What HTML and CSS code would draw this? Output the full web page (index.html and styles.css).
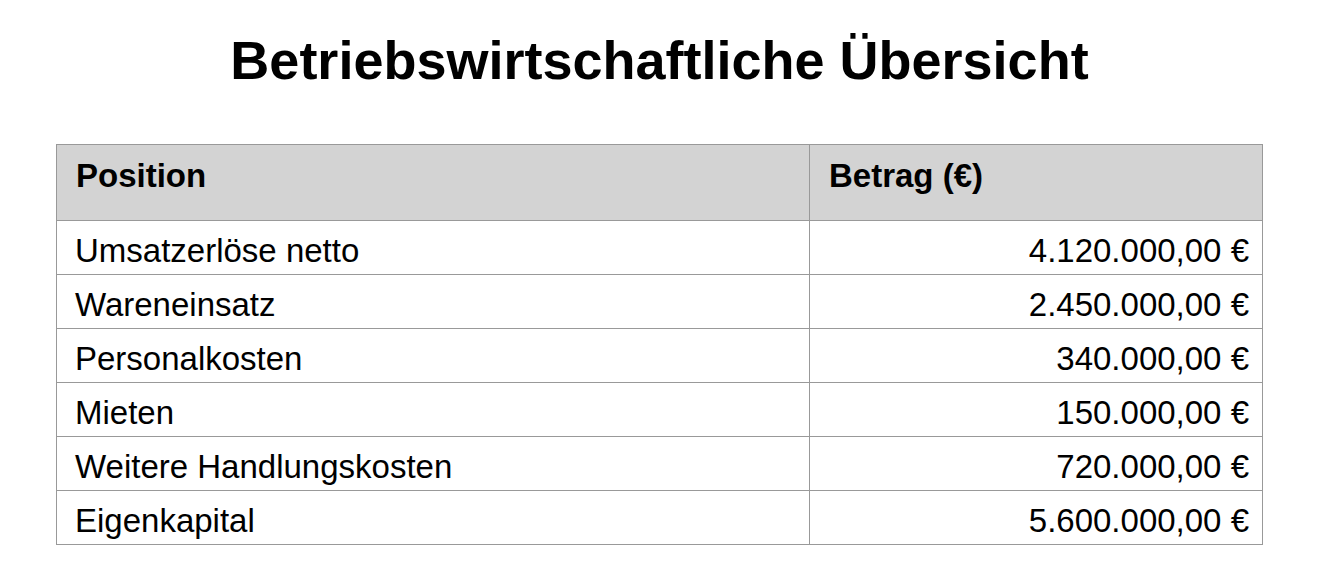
FILE: index.html
```html
<!DOCTYPE html>
<html lang="de">
<head>
<meta charset="utf-8">
<title>Betriebswirtschaftliche Übersicht</title>
<link rel="stylesheet" href="styles.css">
</head>
<body>
<main class="page">
  <h1 class="title">Betriebswirtschaftliche Übersicht</h1>
  <table class="sheet">
    <thead>
      <tr>
        <th class="col-pos">Position</th>
        <th class="col-amt">Betrag (€)</th>
      </tr>
    </thead>
    <tbody>
      <tr><td>Umsatzerlöse netto</td><td class="num">4.120.000,00 €</td></tr>
      <tr><td>Wareneinsatz</td><td class="num">2.450.000,00 €</td></tr>
      <tr><td>Personalkosten</td><td class="num">340.000,00 €</td></tr>
      <tr><td>Mieten</td><td class="num">150.000,00 €</td></tr>
      <tr><td>Weitere Handlungskosten</td><td class="num">720.000,00 €</td></tr>
      <tr><td>Eigenkapital</td><td class="num">5.600.000,00 €</td></tr>
    </tbody>
  </table>
</main>
</body>
</html>
```

FILE: styles.css
```css
html, body {
  margin: 0;
  padding: 0;
  background: #ffffff;
}

body {
  font-family: "Liberation Sans", Arial, Helvetica, sans-serif;
  color: #000000;
}

.page {
  padding: 0 57px 0 56px;
}

.title {
  margin: 0;
  padding-top: 29px;
  height: 144px;
  box-sizing: border-box;
  text-align: center;
  font-size: 54px;
  font-weight: 700;
  line-height: 62px;
}

.sheet {
  width: 100%;
  border-collapse: collapse;
  border: 1px solid #999999;
}

.sheet th,
.sheet td {
  border: 1px solid #999999;
  font-size: 33px;
  line-height: 38px;
  box-sizing: border-box;
  vertical-align: top;
}

.sheet th {
  background: #d3d3d3;
  text-align: left;
  font-weight: 700;
  height: 76px;
  padding: 12px 18px 0 19px;
}

.col-pos {
  width: 753px;
}

.sheet td {
  font-weight: 400;
  height: 54px;
  padding: 11px 13px 0 18px;
}

.sheet td.num {
  text-align: right;
}
```
